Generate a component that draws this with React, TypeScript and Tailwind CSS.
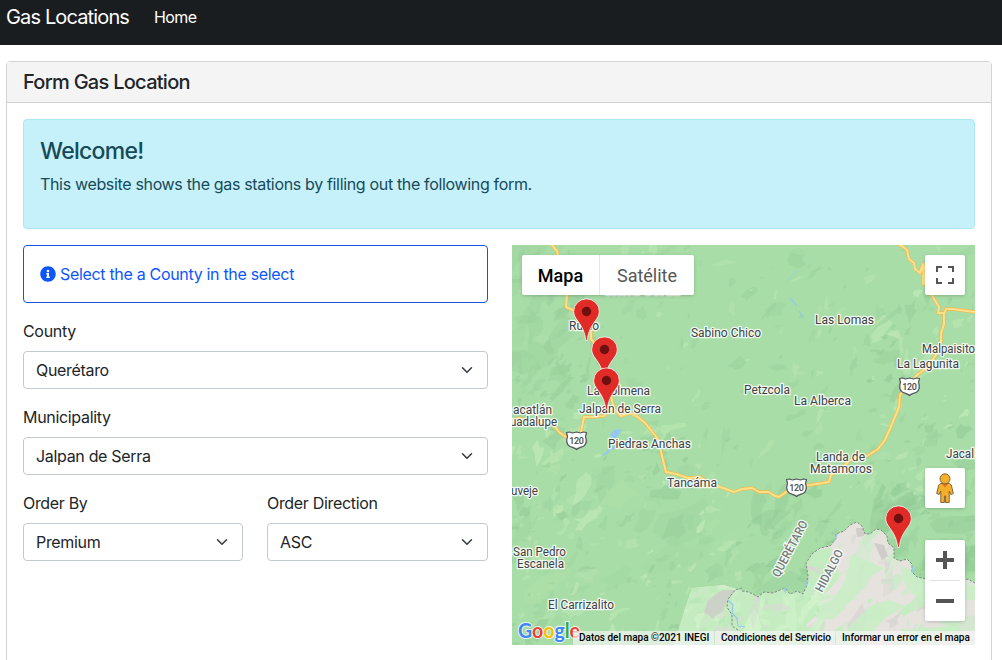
import React from "react";
import { FaInfoCircle } from "react-icons/fa";

function Select({ label, value }: { label: string; value: string }) {
  return (
    <div className="min-w-0">
      <label className="mb-2 block h-6 leading-6">{label}</label>
      <button className="flex h-[38px] w-full items-center justify-between rounded border border-[#c3c9d1] bg-white pr-3 pl-3 text-left">
        <span>{value}</span>
        <svg width="16" height="12" viewBox="0 0 16 16" fill="none" stroke="#343a40" strokeWidth="2" strokeLinecap="round" strokeLinejoin="round">
          <path d="M2 5l6 6 6-6" />
        </svg>
      </button>
    </div>
  );
}

// Deterministic generator so that the relief shading is the same on every render.
function makeRandom(seed: number) {
  let s = seed;
  return () => {
    s = (s * 1664525 + 1013904223) % 4294967296;
    return s / 4294967296;
  };
}

type Patch = { d: string; fill: string; opacity: number };

function relief(seed: number, count: number, x0: number, y0: number, w: number, h: number, colors: string[], size: number, strength: number): Patch[] {
  const rnd = makeRandom(seed);
  const out: Patch[] = [];
  for (let i = 0; i < count; i++) {
    const cx = x0 + rnd() * w;
    const cy = y0 + rnd() * h;
    const len = size * (0.3 + 1.8 * rnd() * rnd());
    const wid = len * (0.25 + rnd() * 0.45);
    const a = -0.75 + (rnd() - 0.5) * 1.7;
    const pts: string[] = [];
    for (let k = 0; k < 9; k++) {
      const t = (k / 9) * Math.PI * 2;
      const r = 0.3 + rnd() * 1.0;
      const px = Math.cos(t) * len * r;
      const py = Math.sin(t) * wid * r;
      pts.push((cx + px * Math.cos(a) - py * Math.sin(a)).toFixed(1) + "," + (cy + px * Math.sin(a) + py * Math.cos(a)).toFixed(1));
    }
    out.push({ d: "M" + pts.join("L") + "Z", fill: colors[Math.floor(rnd() * colors.length)], opacity: strength * (0.4 + rnd() * 0.6) });
  }
  return out;
}

const hills = [
  ...relief(55, 22, 512, 470, 230, 160, ["#9ed4a0", "#b0e1ab"], 26, 0.5),
  ...relief(23, 18, 512, 245, 60, 200, ["#9ad09d"], 24, 0.5),
  ...relief(29, 26, 760, 500, 215, 90, ["#93cb97"], 22, 0.55),
  ...relief(7, 330, 512, 245, 463, 400, ["#9dd49f", "#9dd49f", "#b7e5b0"], 8, 0.9),
  ...relief(31, 130, 512, 430, 230, 215, ["#98cf9b", "#bce7b4"], 9, 0.9),
  ...relief(12, 60, 512, 245, 75, 200, ["#98cf9b", "#9ad09d"], 10, 0.7),
  ...relief(57, 80, 870, 290, 105, 220, ["#98cf9b", "#bce7b4"], 10, 0.9),
  ...relief(17, 80, 750, 490, 225, 95, ["#90c994", "#9bd29e"], 11, 0.65),
];
const plains = [
  ...relief(91, 130, 790, 530, 185, 115, ["#c3edc1", "#c3edc1", "#c9efc6", "#dad6d3"], 13, 1),
  ...relief(47, 100, 680, 585, 150, 60, ["#d2f3cc", "#b9e6b6", "#d3f2ce", "#d6ddd0"], 11, 0.9),
];

const border =
  "M742 591L749 592L758 597L764 592L773 593L785 588L790 594L797 591L803 594L807 585L808 576L806 563L812 554L820 548L830 546L836 539L836 534L844 531L850 525L857 522L862 526L865 534L870 534L876 529L881 530L887 536L888 543L894 548L894 558L900 561L907 559L912 564L912 572L917 577L926 579L950 584L968 579L975 583";

const roads = [
  "M550 243L557 251L559 260L564 280L567 294L566 307L573 310L580 312L588 320L591 330L591 339L596 345L600 360L606 378L611 396L614 409L621 416L630 413L638 417L646 424L658 439L661 452L666 472L676 474L688 478L700 477L712 484L734 492L742 489L752 488L759 492L769 492L773 495L779 497L786 492L800 486L810 485L829 482L831 475L840 470L850 460L867 456L878 449L885 440L892 424L899 407L900 395L908 386L918 374L928 367L937 353L941 343L941 334L944 324L944 313L938 313L939 307L933 297L925 284L923 281L924 266L920 273L915 269L914 263L909 259L907 250L902 246L898 244",
  "M944 314L946 309L952 309L975 312",
  "M512 422L518 418L529 421L552 423L559 432L566 437L582 440L581 432L584 417L592 417L604 416L608 411L613 408",
  "M923 284L926 270L923 264L920 272",
];

function Label({ x, y, w, children }: { x: number; y: number; w: number; children: string }) {
  return (
    <text x={x} y={y} textLength={w} lengthAdjust="spacingAndGlyphs" fontSize="12" fill="#3d4246" stroke="#fff" strokeOpacity="0.85" strokeWidth="2.6" strokeLinejoin="round" paintOrder="stroke">
      {children}
    </text>
  );
}

function Shield({ x, y }: { x: number; y: number }) {
  return (
    <g transform={`translate(${x} ${y})`}>
      <path d="M-10 -8L-7 -8.5L-4 -7.5L0 -8.5L4 -7.5L7 -8.5L10 -8L9 -4C10.500 0 10.500 2 8 5C5 7 2 7 0 9C-2 7 -5 7 -8 5C-10.500 2 -10.500 0 -9 -4Z" fill="#fff" stroke="#50555a" strokeWidth="1.2" strokeLinejoin="round" />
      <text x="-7.200" y="3.500" textLength="14.500" fontSize="9" fontWeight="500" fill="#43484c">120</text>
    </g>
  );
}

function Pin({ x, y }: { x: number; y: number }) {
  return (
    <g transform={`translate(${x} ${y})`}>
      <path d="M-0.700 29L0.700 29C1.800 20 4.500 15.500 8.300 10C11.300 6 12.800 3.500 12.800 0A12.800 12.600 0 0 0 -12.800 0C-12.800 3.500 -11.300 6 -8.300 10C-4.500 15.500 -1.800 20 -0.700 29Z" fill="#e12b27" stroke="#fff" strokeOpacity="0.75" strokeWidth="1" />
      <circle r="4.700" fill="#6f1010" />
    </g>
  );
}

function MapDrawing() {
  return (
    <svg className="block h-full w-full font-[Roboto,sans-serif]" viewBox="512 245 463 400">
      <defs>
        <clipPath id="lowland">
          <path d={border + "L975 645L674 645L684 612L692 588L724 585L742 591Z"} />
        </clipPath>
      </defs>
      <rect x="512" y="245" width="463" height="400" fill="#a8dda7" />
      {hills.map((p, i) => <path key={i} d={p.d} fill={p.fill} opacity={p.opacity} />)}
      <g clipPath="url(#lowland)">
        <rect x="660" y="510" width="315" height="135" fill="#e6e3df" />
        <path d="M665 645L692 580L718 586L742 588L810 588L822 610L806 625L812 645ZM812 588L806 562L815 550L832 548L826 575Z" fill="#c5ecc1" />
        {plains.map((p, i) => <path key={i} d={p.d} fill={p.fill} opacity={p.opacity} />)}
        <path d="M852 556L866 560L884 568L868 578L862 590L846 606L838 612L832 600L843 585ZM848 628L870 606L890 600L905 606L885 618L862 645L840 645ZM900 566L912 570L930 582L975 586L975 600L922 602L905 585ZM900 630L960 625L950 640L905 645ZM820 606L840 596L846 608L832 620L818 618Z" fill="#c8eec5" opacity="0.85" />
        <path d="M722 590L736 590L728 600L722 612L712 618L704 612L708 600Z" fill="#cdd2c8" />
        <path d="M856 528L864 528L864 536L857 537ZM874 543L884 545L888 556L882 560Z" fill="#cfccca" />
      </g>
      <path d={border + "M742 588L735 590L728 599L727 607L732 615L732 626L741 632"} fill="none" stroke="#7f8b86" strokeWidth="1" strokeDasharray="2.500 1.500" />
      <g fill="none" stroke="#93c9ef" strokeWidth="1.200" strokeLinejoin="round">
        <path d="M603 455L607 453L609 449L613 449L616 444" strokeWidth="2" />
        <path d="M790 298L797 306M799 311L803 318" />
        <path d="M787 281L798 270" strokeOpacity="0.4" />
        <path d="M835 540L837 534M805 588L808 581M784 588L786 593M912 566L913 573" />
        <path d="M728 600L733 605L732 613L737 618L738 626L745 627" />
      </g>
      <path d="M610 435L614 430L622 429L619 434L616 439L611 437Z" fill="#93c7f2" />
      <g fill="none" strokeLinecap="round" strokeLinejoin="round">
        {roads.map((d, i) => <path key={i} d={d} stroke="#edbb4f" strokeWidth="3.400" />)}
        {roads.map((d, i) => <path key={i} d={d} stroke="#ffe08a" strokeWidth="2" />)}
      </g>
      <Shield x={576.5} y={440.5} />
      <Shield x={909.5} y={386.5} />
      <Shield x={796.5} y={487.5} />
      <Label x={604} y={295} w={76}>Sierra Gorda</Label>
      <Label x={569} y={330} w={30}>Rucio</Label>
      <Label x={691} y={337} w={70}>Sabino Chico</Label>
      <Label x={815} y={324} w={59}>Las Lomas</Label>
      <Label x={922} y={353} w={53}>Malpaisito</Label>
      <Label x={897} y={368} w={62}>La Lagunita</Label>
      <Label x={744} y={394} w={46}>Petzcola</Label>
      <Label x={794} y={405} w={57}>La Alberca</Label>
      <Label x={587} y={395} w={63}>La Colmena</Label>
      <Label x={579} y={413} w={82}>Jalpan de Serra</Label>
      <Label x={513} y={414} w={39}>acatlán</Label>
      <Label x={510} y={426} w={47}>uadalupe</Label>
      <Label x={608} y={448} w={83}>Piedras Anchas</Label>
      <Label x={667} y={487} w={50}>Tancáma</Label>
      <Label x={816} y={461} w={49}>Landa de</Label>
      <Label x={810} y={473} w={62}>Matamoros</Label>
      <Label x={946} y={458} w={28}>Jacal</Label>
      <Label x={511} y={495} w={27}>uveje</Label>
      <Label x={513} y={556} w={53}>San Pedro</Label>
      <Label x={517} y={568} w={47}>Escanela</Label>
      <Label x={548} y={609} w={66}>El Carrizalito</Label>
      <g fontSize="12" fill="#747b7b" stroke="#fff" strokeOpacity="0.85" strokeWidth="2.600" paintOrder="stroke" fontWeight="500">
        <text transform="translate(779 578) rotate(-62)" textLength="62" lengthAdjust="spacingAndGlyphs">QUERÉTARO</text>
        <text transform="translate(822 593) rotate(-62)" textLength="46" lengthAdjust="spacingAndGlyphs">HIDALGO</text>
      </g>
      <Pin x={586.5} y={311.500} />
      <Pin x={604.5} y={349.500} />
      <Pin x={606.5} y={380.500} />
      <Pin x={898.5} y={518.500} />
      <text x="518" y="637.5" textLength="62" lengthAdjust="spacingAndGlyphs" className="font-[Lato,sans-serif]" fontSize="21.5" fontWeight="700" stroke="#fff" strokeWidth="2" strokeOpacity="0.8" paintOrder="stroke">
        <tspan fill="#4285f4">G</tspan><tspan fill="#ea4335">o</tspan><tspan fill="#fbbc05">o</tspan><tspan fill="#4285f4">g</tspan><tspan fill="#34a853">l</tspan><tspan fill="#ea4335">e</tspan>
      </text>
    </svg>
  );
}

function GasMap() {
  return (
    <div className="relative h-[400px] w-[463px] overflow-hidden font-[Roboto,sans-serif] tracking-normal">
      <MapDrawing />
      <div className="absolute top-[10px] left-[10px] flex h-10 rounded-xs bg-white text-[18px] shadow-[0_1px_4px_-1px_rgba(0,0,0,0.3)]">
        <button className="w-[77px] font-medium text-black">Mapa</button>
        <button className="w-[95px] border-l border-[#e6e6e6] text-[#565656]">Satélite</button>
      </div>
      <button className="absolute top-[10px] right-[10px] flex size-10 items-center justify-center rounded-xs bg-white shadow-[0_1px_4px_-1px_rgba(0,0,0,0.3)]">
        <svg width="18" height="18" viewBox="0 0 18 18" fill="#555">
          <path d="M0 0v6h2V2h4V0H0zM16 0h-4v2h4v4h2V0h-2zM16 16h-4v2h6v-6h-2v4zM2 12H0v6h6v-2H2v-4z" />
        </svg>
      </button>
      <button className="absolute top-[223px] right-[10px] flex size-10 items-center justify-center rounded-xs bg-white shadow-[0_1px_4px_-1px_rgba(0,0,0,0.3)]">
        <svg width="18" height="30" viewBox="0 0 18 30" fill="#f5b02a" stroke="#80663b" strokeWidth="1" strokeLinejoin="round">
          <path d="M4.500 10.500H13.500L15.300 12L17.300 20.500L14.800 21.500L13.200 18V29.500H9.600V23H8.400V29.500H4.800V18L3.200 21.500L0.700 20.500L2.700 12Z" />
          <path d="M5.500 10.500H12.500L9 14.500Z" fill="#df702b" stroke="none" />
          <circle cx="9" cy="5.800" r="5" />
        </svg>
      </button>
      <div className="absolute top-[295px] right-[10px] flex h-[81px] w-10 flex-col items-center rounded-xs bg-white shadow-[0_1px_4px_-1px_rgba(0,0,0,0.3)]">
        <button className="flex h-10 items-center">
          <svg width="18" height="18" viewBox="0 0 18 18" fill="#555"><path d="M7 0h4v7h7v4h-7v7H7v-7H0V7h7z" /></svg>
        </button>
        <div className="h-px w-[30px] bg-[#e0e0e0]" />
        <button className="flex h-10 items-center">
          <svg width="18" height="18" viewBox="0 0 18 18" fill="#555"><path d="M0 7h18v4H0z" /></svg>
        </button>
      </div>
      <div className="absolute right-0 bottom-0 flex h-[14px] gap-px text-[10px] leading-[14px] font-medium whitespace-nowrap text-black">
        <span className="w-[141px] bg-[#f5f5f5]/70 pl-[6px]">Datos del mapa ©2021 INEGI</span>
        <span className="w-[120px] bg-[#f5f5f5]/70 pl-[6px]">Condiciones del Servicio</span>
        <span className="w-[139px] bg-[#f5f5f5]/70 pl-[6px]">Informar un error en el mapa</span>
      </div>
    </div>
  );
}

export default function App() {
  return (
    <div className="h-[660px] overflow-hidden bg-white font-[Inter,sans-serif] text-base tracking-[-0.02em] text-[#212529]">
      <nav className="flex h-[45px] items-start bg-[#1a1d20] pl-[6px] text-white">
        <a className="mt-0.5 w-[124px] text-[20px] leading-[30px] tracking-[-0.043em] whitespace-nowrap">Gas Locations</a>
        <a className="mt-[5px] ml-6 leading-6 tracking-[-0.035em]">Home</a>
      </nav>
      <main className="mt-4 mr-[10px] ml-[6px] h-[700px] rounded border border-[#d3d3d4]">
        <header className="flex h-[41px] items-center border-b border-[#d0d0d1] bg-[#f4f4f4] pl-4">
          <h1 className="text-[20px] leading-6 font-medium tracking-[-0.036em]">Form Gas Location</h1>
        </header>
        <div className="p-4">
          <section className="h-[110px] rounded border border-[#a9e8f5] bg-[#c6f1fa] p-4 text-[#164a59]">
            <h2 className="mt-px mb-[6px] text-[23px] leading-[29px] font-medium tracking-[-0.032em]">Welcome!</h2>
            <p className="leading-6 tracking-[-0.021em]">This website shows the gas stations by filling out the following form.</p>
          </section>
          <div className="mt-4 flex justify-between">
            <form className="w-[465px]">
              <div className="mb-4 flex h-[58px] items-center rounded border border-[#1653dd] px-4 text-[#0d56fb]">
                <FaInfoCircle size={16} className="mr-1" />
                Select the a County in the select
              </div>
              <Select label="County" value="Querétaro" />
              <div className="mt-4"><Select label="Municipality" value="Jalpan de Serra" /></div>
              <div className="mt-4 grid grid-cols-[220px_221px] gap-6">
                <Select label="Order By" value="Premium" />
                <Select label="Order Direction" value="ASC" />
              </div>
            </form>
            <GasMap />
          </div>
        </div>
      </main>
    </div>
  );
}
